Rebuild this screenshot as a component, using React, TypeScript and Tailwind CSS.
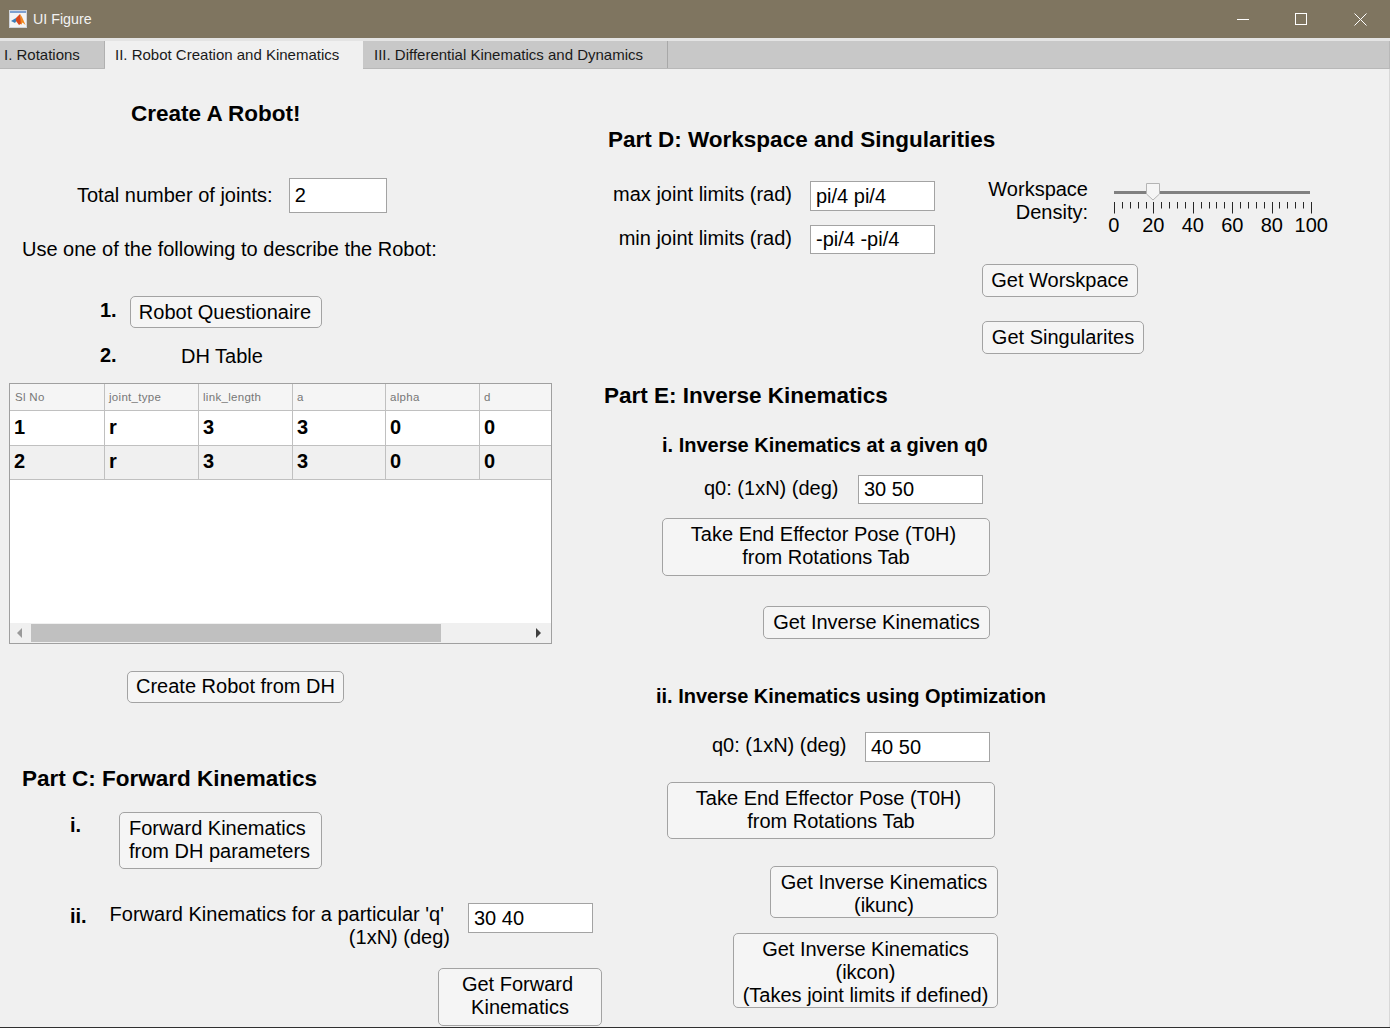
import React from "react";

const Btn = ({ className, children }: { className: string; children: React.ReactNode }) => (
  <button className={"flex items-center justify-center shrink-0 rounded-[5px] border border-[#a3a3a3] bg-[#f5f5f5] text-center text-[20px] leading-[23px] text-black " + className}>
    <span>{children}</span>
  </button>
);

const Field = ({ className, value }: { className: string; value: string }) => (
  <div className={"flex items-center shrink-0 border border-[#a3a3a3] bg-white pl-[5px] text-[20px] leading-[23px] text-black " + className}>{value}</div>
);

const Head = ({ className, children }: { className: string; children: React.ReactNode }) => (
  <div className={"text-[22.5px] leading-[28px] font-bold text-black whitespace-nowrap " + className}>{children}</div>
);

const Sub = ({ className, children }: { className: string; children: React.ReactNode }) => (
  <div className={"text-[20px] leading-[24px] font-bold text-black whitespace-nowrap " + className}>{children}</div>
);

const Label = ({ className, children }: { className: string; children: React.ReactNode }) => (
  <div className={"text-[20px] leading-[23px] text-black whitespace-nowrap " + className}>{children}</div>
);

const HCell = ({ children, last }: { children: string; last?: boolean }) => (
  <div className={"h-[27px] border-b border-[#c0c0c0] bg-[#f5f5f5] text-[11.5px] tracking-[0.3px] leading-[27px] text-[#777777] " + (children === "Sl No" ? "pl-[5px] " : "pl-[4px] ") + (last ? "" : "border-r")}>{children}</div>
);

const Cell = ({ children, last, shade }: { children: string; last?: boolean; shade?: boolean }) => (
  <div className={"border-b border-[#c0c0c0] pl-[4px] text-[20px] font-bold text-black " + (shade ? "h-[34px] leading-[30px] bg-[#f0f0f0] " : "h-[35px] leading-[32px] bg-white ") + (last ? "" : "border-r")}>{children}</div>
);

const rows = [
  ["1", "r", "3", "3", "0", "0"],
  ["2", "r", "3", "3", "0", "0"],
];

const Ticks = () => {
  const minor: number[] = [];
  for (let i = 0; i <= 25; i++) minor.push(i);
  return (
    <svg width="200" height="13" className="block">
      {minor.map((i) => {
        const x = Math.round((i * 197) / 25) + 0.5;
        const major = i % 5 === 0;
        return <line key={i} x1={x} x2={x} y1="0" y2={major ? 11.5 : 6.5} stroke="#262626" strokeWidth="1" />;
      })}
    </svg>
  );
};

const Trail = ({ children }: { children: string }) => <span className="pr-[5px]">{children}</span>;

export default function App() {
  return (
    <div className="flex h-[1028px] w-[1390px] flex-col overflow-hidden border-b border-[#303030] bg-[#f0f0f0] font-['Liberation_Sans',Arial,sans-serif]">
      <div className="flex h-[38px] shrink-0 items-center bg-[#7f7560] pl-[9px]">
        <svg width="18" height="18" viewBox="0 0 18 18">
          <rect x="0.5" y="0.5" width="17" height="17" fill="#f4f4f4" stroke="#d0d4dc" />
          <rect x="1" y="1" width="16" height="2" fill="#7da0d0" />
          <path d="M2 11 L7 8 L8.5 9.5 L6 13 Z" fill="#3f7fb8" />
          <path d="M7 8 L11 4 L13 13 L10 15 L7 11 Z" fill="#d9481c" />
          <path d="M11 4 L13 7 L16.5 15 L13.5 12.5 L12 15 Z" fill="#f08a24" />
        </svg>
        <span className="ml-[6px] mt-[2px] text-[14.25px] text-[#f2f2f2]">UI Figure</span>
        <div className="ml-auto flex pr-[1px]">
          <div className="flex h-[38px] w-[58px] items-center justify-center">
            <svg width="12" height="12"><line x1="0" x2="12" y1="6.5" y2="6.5" stroke="#fff" /></svg>
          </div>
          <div className="mr-[1px] flex h-[38px] w-[58px] items-center justify-center">
            <svg width="12" height="12"><rect x="0.5" y="0.5" width="11" height="11" fill="none" stroke="#fff" /></svg>
          </div>
          <div className="flex h-[38px] w-[58px] items-center justify-center">
            <svg width="13" height="13"><path d="M0.5 0.5 L12.5 12.5 M12.5 0.5 L0.5 12.5" stroke="#fff" fill="none" /></svg>
          </div>
        </div>
      </div>

      <div className="h-[3px] shrink-0 bg-[#e4e4e4]" />

      <div className="flex h-[28px] shrink-0 border-b border-r border-[#b8b8b8] bg-[#c8c8c8] text-[15px] leading-[28px] text-[#1a1a1a]">
        <div className="w-[105px] border-r border-[#b0b0b0] pl-[4px]">I. Rotations</div>
        <div className="z-10 h-[28px] w-[258px] bg-[#f0f0f0] pl-[10px]">II. Robot Creation and Kinematics</div>
        <div className="w-[305px] border-r border-[#a8a8a8] pl-[11px]">III. Differential Kinematics and Dynamics</div>
      </div>

      <div className="flex flex-1 border-r border-[#d8d8d8]">
        <div className="flex w-[604px] shrink-0 flex-col">
          <Head className="ml-[131px] mt-[31px]">Create A Robot!</Head>
          <div className="ml-[77px] mt-[50px] flex h-[35px] items-center gap-[16px]">
            <Label className="">Total number of joints:</Label>
            <Field className="h-[35px] w-[98px]" value="2" />
          </div>
          <Label className="ml-[22px] mt-[25px] h-[24px]">Use one of the following to describe the Robot:</Label>
          <div className="ml-[100px] mt-[34px] flex h-[32px]">
            <Sub className="w-[30px] mt-[2px]">1.</Sub>
            <Btn className="h-[32px] w-[192px] pr-[2px]">Robot Questionaire</Btn>
          </div>
          <div className="ml-[100px] mt-[15px] flex h-[25px]">
            <Sub className="w-[81px]">2.</Sub>
            <Label className="mt-[2px]">DH Table</Label>
          </div>
          <div className="ml-[9px] mt-[15px] flex h-[261px] w-[543px] flex-col overflow-hidden border border-[#a0a0a0] bg-white">
            <div className="grid grid-cols-[95px_94px_94px_93px_94px_71px]">
              {["Sl No", "joint_type", "link_length", "a", "alpha", "d"].map((h, i) => (
                <HCell key={h} last={i === 5}>{h}</HCell>
              ))}
              {rows.map((r, ri) =>
                r.map((c, ci) => (
                  <Cell key={ri + "-" + ci} last={ci === 5} shade={ri === 1}>{c}</Cell>
                ))
              )}
            </div>
            <div className="flex-1" />
            <div className="flex h-[20px] items-center bg-[#f0f0f0]">
              <svg width="21" height="20" className="shrink-0"><path d="M12 5 L12 15 L7 10 Z" fill="#9a9a9a" /></svg>
              <div className="h-[18px] w-[410px] bg-[#c0c0c0]" />
              <svg width="11" height="20" className="ml-auto mr-[5px] shrink-0"><path d="M1 5 L1 15 L6 10 Z" fill="#404040" /></svg>
            </div>
          </div>
          <Btn className="ml-[127px] mt-[27px] h-[32px] w-[217px] pb-[2px]">Create Robot from DH</Btn>
          <Head className="ml-[22px] mt-[62px]">Part C: Forward Kinematics</Head>
          <div className="ml-[70px] mt-[19px] flex h-[57px]">
            <Sub className="w-[49px] mt-[1px]">i.</Sub>
            <Btn className="h-[57px] w-[203px] pb-[2px] pr-[2px]">
              <span className="block text-left">Forward Kinematics<br />from DH parameters</span>
            </Btn>
          </div>
          <div className="ml-[70px] mt-[34px] flex h-[46px]">
            <Sub className="w-[39px] mt-[1px]">ii.</Sub>
            <div className="w-[341px] text-right text-[20px] leading-[23px] text-black">
              <div className="pr-[6px]">Forward Kinematics for a particular 'q'</div>
              <div>(1xN) (deg)</div>
            </div>
            <Field className="ml-[18px] h-[30px] w-[125px]" value="30 40" />
          </div>
          <Btn className="ml-[438px] mt-[19px] h-[58px] w-[164px] pb-[2px]"><Trail>Get Forward</Trail><br />Kinematics</Btn>
        </div>

        <div className="flex flex-1 flex-col">
          <Head className="ml-[4px] mt-[57px]">Part D: Workspace and Singularities</Head>
          <div className="mt-[24px] flex">
            <div className="w-[378px] shrink-0 pt-[3px]">
              <div className="flex h-[30px] items-center">
                <Label className="w-[188px] text-right mb-[3px]">max joint limits (rad)</Label>
                <Field className="ml-[18px] h-[30px] w-[125px]" value="pi/4 pi/4" />
              </div>
              <div className="mt-[14px] flex h-[29px] items-center">
                <Label className="w-[188px] text-right mb-[2px]">min joint limits (rad)</Label>
                <Field className="ml-[18px] h-[29px] w-[125px]" value="-pi/4 -pi/4" />
              </div>
            </div>
            <div className="flex flex-col">
              <div className="flex h-[86px]">
                <Label className="w-[106px] text-right">Workspace<br />Density:</Label>
                <div className="ml-[26px] w-[200px] pt-[5px]">
                  <div className="relative h-[19px] pt-[8px]">
                    <div className="h-[3px] w-[196px] bg-[#808080]" />
                    <svg width="15" height="18" className="absolute left-[32px] top-0">
                      <path d="M0.5 0.5 H13.5 V11 L7 17 L0.5 11 Z" fill="#f5f5f5" stroke="#b4b4b4" />
                    </svg>
                  </div>
                  <Ticks />
                  <div className="ml-[-20px] mt-[-2px] grid w-[237px] grid-cols-6 text-center text-[20px] leading-[24px] text-black">
                    {["0", "20", "40", "60", "80", "100"].map((t) => <span key={t}>{t}</span>)}
                  </div>
                </div>
              </div>
              <Btn className="h-[33px] w-[156px]">Get Worskpace</Btn>
              <Btn className="mt-[24px] h-[33px] w-[162px]">Get Singularites</Btn>
            </div>
          </div>
          <Head className="mt-[28px]">Part E: Inverse Kinematics</Head>
          <Sub className="ml-[58px] mt-[23px]">i. Inverse Kinematics at a given q0</Sub>
          <div className="ml-[100px] mt-[18px] flex h-[29px] items-center">
            <Label className="w-[154px] mb-[2px]">q0: (1xN) (deg)</Label>
            <Field className="h-[29px] w-[125px]" value="30 50" />
          </div>
          <Btn className="ml-[58px] mt-[14px] h-[58px] w-[328px] pb-[2px]"><Trail>Take End Effector Pose (T0H)</Trail><br />from Rotations Tab</Btn>
          <Btn className="ml-[159px] mt-[30px] h-[33px] w-[227px]">Get Inverse Kinematics</Btn>
          <Sub className="ml-[52px] mt-[45px]">ii. Inverse Kinematics using Optimization</Sub>
          <div className="ml-[108px] mt-[24px] flex h-[30px] items-center">
            <Label className="w-[153px] mb-[4px]">q0: (1xN) (deg)</Label>
            <Field className="h-[30px] w-[125px]" value="40 50" />
          </div>
          <Btn className="ml-[63px] mt-[20px] h-[57px] w-[328px] pb-[2px]"><Trail>Take End Effector Pose (T0H)</Trail><br />from Rotations Tab</Btn>
          <Btn className="ml-[166px] mt-[27px] h-[52px] w-[228px] pt-[4px]">Get Inverse Kinematics<br />(ikunc)</Btn>
          <Btn className="ml-[129px] mt-[15px] h-[75px] w-[265px] pt-[4px]">Get Inverse Kinematics<br />(ikcon)<br />(Takes joint limits if defined)</Btn>
        </div>
      </div>
    </div>
  );
}
